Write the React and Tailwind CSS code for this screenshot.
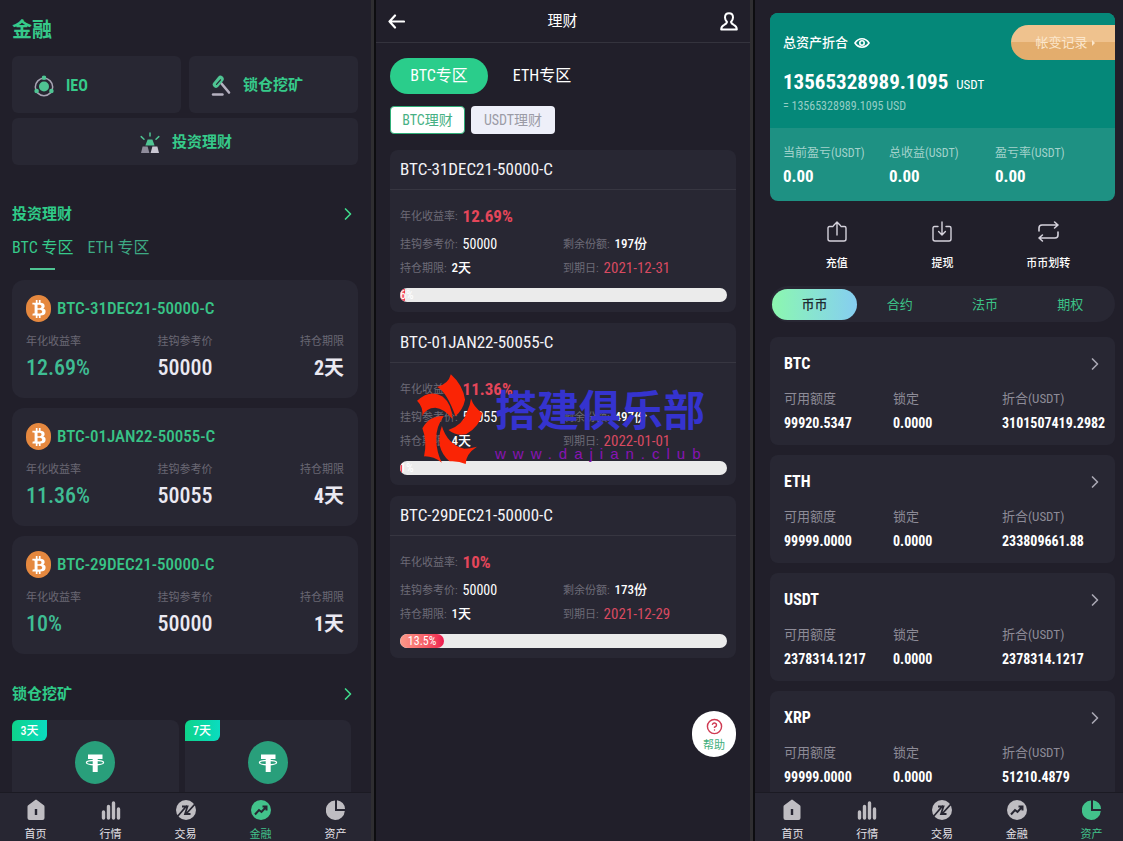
import React, { useState } from 'react';
import { FaBtc } from 'react-icons/fa6';
import { ChevronRight, CircleHelp } from 'lucide-react';

const products = [
  { name: 'BTC-31DEC21-50000-C', rate: '12.69%', price: '50000', days: '2天', left: '197份', due: '2021-12-31', progress: 1.5, label: '6%' },
  { name: 'BTC-01JAN22-50055-C', rate: '11.36%', price: '50055', days: '4天', left: '497份', due: '2022-01-01', progress: 0.5, label: '1%' },
  { name: 'BTC-29DEC21-50000-C', rate: '10%', price: '50000', days: '1天', left: '173份', due: '2021-12-29', progress: 13.5, label: '13.5%' },
];

const coins = [
  { name: 'BTC', available: '99920.5347', locked: '0.0000', total: '3101507419.2982' },
  { name: 'ETH', available: '99999.0000', locked: '0.0000', total: '233809661.88' },
  { name: 'USDT', available: '2378314.1217', locked: '0.0000', total: '2378314.1217' },
  { name: 'XRP', available: '99999.0000', locked: '0.0000', total: '51210.4879' },
];

/* ---------- icons ---------- */

const IeoIcon = () => (
  <svg viewBox="0 0 20 22" className="w-5 h-[22px]" fill="none">
    <circle cx="10" cy="12" r="8.7" stroke="#a9a5b5" strokeWidth="1.5" />
    <circle cx="10" cy="11.5" r="5" fill="#4fc493" />
    <circle cx="10" cy="2.8" r="2.3" fill="#4fc493" />
    <circle cx="2.6" cy="16" r="2.3" fill="#4fc493" />
    <circle cx="17.4" cy="16" r="2.3" fill="#4fc493" />
  </svg>
);

const HammerIcon = () => (
  <svg viewBox="0 0 20 22" className="w-5 h-[22px]" fill="none">
    <path d="M10 8l8 9.5" stroke="#b5b1c0" strokeWidth="2.6" strokeLinecap="round" />
    <path d="M5 9.5L9.5 4" stroke="#4fc493" strokeWidth="6.4" strokeLinecap="round" />
    <path d="M5.5 9.3L9.5 4.800" stroke="#282733" strokeWidth="1.2" strokeLinecap="round" />
    <path d="M2 19.500h9.500" stroke="#b5b1c0" strokeWidth="2.4" strokeLinecap="round" />
  </svg>
);

const GoldIcon = () => (
  <svg viewBox="0 0 20 22" className="w-5 h-[22px]">
    <path d="M7.6 7.500h4.800l2.200 6H5.400z" fill="#4fc493" />
    <path d="M2.600 14.500h5l1.800 6.500H1z" fill="#8f8c9b" />
    <path d="M12.400 14.500h5l1.600 6.500h-8.400z" fill="#c9c6d2" />
    <path d="M10 1v3M1.200 4.600L4 7.200M18.800 4.600L16 7.200" stroke="#4fc493" strokeWidth="1.5" strokeLinecap="round" />
  </svg>
);

const TetherIcon = () => (
  <svg viewBox="0 0 40 43" className="w-10 h-[43px]">
    <ellipse cx="20" cy="21.5" rx="20" ry="21.5" fill="#299f7b" />
    <path d="M13 13.500h14.500v4.600h-4.800v12.900h-5V18.100H13z" fill="#fff" />
    <ellipse cx="20" cy="21.6" rx="8.6" ry="2.2" fill="none" stroke="#fff" strokeWidth="1.2" />
  </svg>
);

const BackIcon = () => (
  <svg viewBox="0 0 17 15" className="w-[17px] h-[15px]" fill="none" stroke="#fff" strokeWidth="2.2" strokeLinecap="round" strokeLinejoin="round">
    <path d="M7 1.500L1.500 7.500L7 13.500M1.500 7.500H16" />
  </svg>
);

const UserIcon = () => (
  <svg viewBox="0 0 18 19" className="w-[18px] h-[19px]" fill="none" stroke="#fff" strokeWidth="2" strokeLinejoin="round">
    <path d="M9 1.200C6.600 1.200 5 3 5 5.400c0 2.200.8 3.200 2 4.600-.3 1.400-1.200 2-2.800 2.800C2 13.800 1.200 14.600 1.200 17.600h15.600c0-3-.8-3.800-3-4.800-1.600-.8-2.500-1.400-2.800-2.800 1.200-1.400 2-2.400 2-4.600C13 3 11.400 1.200 9 1.200z" />
  </svg>
);

const EyeIcon = () => (
  <svg viewBox="0 0 16 12" className="w-4 h-3" fill="none" stroke="#fff" strokeWidth="1.6">
    <path d="M1 6c3.600-5.600 10.400-5.600 14 0-3.600 5.600-10.400 5.600-14 0z" />
    <circle cx="8" cy="6" r="2.2" />
  </svg>
);

const DepositIcon = () => (
  <svg viewBox="0 0 20 21" className="w-5 h-[21px]" fill="none" stroke="#d5d2dc" strokeWidth="1.4" strokeLinecap="round" strokeLinejoin="round">
    <path d="M6 5.500H2.500Q1 5.500 1 7v11q0 2 2 2h14q2 0 2-2V7q0-1.500-1.500-1.500H14M10 14V1.200M6.600 4.400L10 1l3.400 3.400" />
  </svg>
);

const WithdrawIcon = () => (
  <svg viewBox="0 0 20 21" className="w-5 h-[21px]" fill="none" stroke="#d5d2dc" strokeWidth="1.4" strokeLinecap="round" strokeLinejoin="round">
    <path d="M6 5.500H2.500Q1 5.500 1 7v11q0 2 2 2h14q2 0 2-2V7q0-1.500-1.500-1.500H14M10 1v13M6.600 10.600L10 14l3.400-3.400" />
  </svg>
);

const TransferIcon = () => (
  <svg viewBox="0 0 21 21" className="w-[21px] h-[21px]" fill="none" stroke="#d5d2dc" strokeWidth="1.6" strokeLinecap="round" strokeLinejoin="round">
    <path d="M1 10V7q0-3 3-3h16M16.600 1L20 4l-3.400 3M20 11v3q0 3-3 3H1M4.400 14L1 17l3.400 3" />
  </svg>
);

const navIcons = {
  home: (
    <>
      <path d="M9.200.9q.8-.6 1.600 0l7 5.400q.7.500.7 1.400V19q0 2-2 2h-13q-2 0-2-2V7.700q0-.9.700-1.400z" fill="currentColor" />
      <path d="M10 10v6" stroke="#272632" strokeWidth="2.4" />
    </>
  ),
  market: <path d="M2.500 13v6M7.500 7.500V19M12.500 4v15M17.500 10v9" stroke="currentColor" strokeWidth="3.4" strokeLinecap="round" />,
  trade: (
    <>
      <circle cx="10" cy="11" r="10" fill="currentColor" />
      <path d="M1 18L11 6.500M9.500 15.500L19.500 4.500M6 7.500h5.500L9 15h5.500" stroke="#272632" strokeWidth="1.8" fill="none" />
    </>
  ),
  finance: (
    <>
      <circle cx="10" cy="11" r="10" fill="currentColor" />
      <path d="M4 15.500l4-4.500 2.500 2L15 8M11.500 7.500H15.500V11.500" stroke="#272632" strokeWidth="2" fill="none" />
    </>
  ),
  assets: (
    <>
      <path d="M9 1.500A9.500 9.800 0 1 0 18.800 12H9z" fill="currentColor" />
      <path d="M11 1.200A9 9 0 0 1 19 10h-8z" fill="currentColor" />
    </>
  ),
};

const navItems = [
  ['home', '首页'],
  ['market', '行情'],
  ['trade', '交易'],
  ['finance', '金融'],
  ['assets', '资产'],
];

const BottomNav = ({ active }) => (
  <nav className="grid grid-cols-5 h-[49px] pt-1.5 bg-[#272632] border-t border-[#1b1a23]">
    {navItems.map(([key, label]) => (
      <a key={key} href={'#' + key} className={active === key ? 'flex flex-col items-center text-[#42c28b]' : 'flex flex-col items-center text-[#bfbdc2]'}>
        <svg viewBox="0 0 20 22" className="w-5 h-[22px]">{navIcons[key]}</svg>
        <span className={active === key ? 'mt-1 text-[11px] leading-5' : 'mt-1 text-[11px] leading-5 text-[#e4e2e8]'}>{label}</span>
      </a>
    ))}
  </nav>
);

/* ---------- left: finance home ---------- */

const SectionHeader = ({ title, className }) => (
  <div className={'flex items-center justify-between ' + className}>
    <h2 className="text-[15px] leading-6 font-bold text-[#2fcb88]">{title}</h2>
    <ChevronRight className="w-5 h-5 text-[#3fdc8c]" strokeWidth={2} />
  </div>
);

const FinancePanel = () => (
  <section className="h-full flex flex-col overflow-hidden bg-[#211f2a] border-r-3 border-[#2f2e31]">
    <div className="flex-1 min-h-0 overflow-hidden pl-3 pr-[13px]">
      <h1 className="pt-3.5 text-xl leading-8 font-bold text-[#36ca8a]">金融</h1>
      <div className="mt-2.5 grid grid-cols-2 gap-x-2 gap-y-[5px] text-base font-bold text-[#36ca8a]">
        <button className="h-[57px] pl-[22px] pt-0.5 flex items-center gap-3 rounded-md bg-[#282733]">
          <IeoIcon />IEO
        </button>
        <button className="h-[57px] pl-[22px] pt-0.5 flex items-center gap-3 rounded-md bg-[#282733] text-[15px]">
          <HammerIcon />锁仓挖矿
        </button>
        <button className="col-span-2 h-[47px] pl-0.5 pt-0.5 flex items-center justify-center gap-3 rounded-md bg-[#282733] text-[15px]">
          <GoldIcon />投资理财
        </button>
      </div>

      <SectionHeader title="投资理财" className="mt-[37px]" />
      <div className="mt-2.5 flex gap-3.5 text-base leading-6 text-[#3ea983]">
        <button className="relative text-[#36ca8a] after:absolute after:left-[18px] after:top-8 after:w-[25px] after:h-0.5 after:bg-[#4fc493]">BTC 专区</button>
        <button>ETH 专区</button>
      </div>

      <div className="mt-5 flex flex-col gap-2.5">
        {products.map((p) => (
          <article key={p.name} className="rounded-xl bg-[#282733] px-3.5 pt-[15px] pb-4">
            <h3 className="flex items-center gap-1.5 text-[17px] font-medium text-[#38c487]">
              <span className="w-[25px] h-[27px] rounded-full bg-[#e5883f] flex items-center justify-center text-white">
                <FaBtc className="w-4 h-[18px]" />
              </span>
              {p.name}
            </h3>
            <dl className="mt-3 grid grid-cols-[1fr_auto_1fr]">
              <div>
                <dt className="text-[11px] leading-4 text-[#6a6874]">年化收益率</dt>
                <dd className="mt-1 text-[22px] leading-7 font-medium text-[#3fbd93]">{p.rate}</dd>
              </div>
              <div className="text-center">
                <dt className="text-[11px] leading-4 text-[#6a6874]">挂钩参考价</dt>
                <dd className="mt-1 text-[22px] leading-7 font-medium text-[#ebe9f2]">{p.price}</dd>
              </div>
              <div className="text-right">
                <dt className="text-[11px] leading-4 text-[#6a6874]">持仓期限</dt>
                <dd className="mt-1 text-xl leading-7 font-bold text-[#ebe9f2]">{p.days}</dd>
              </div>
            </dl>
          </article>
        ))}
      </div>

      <SectionHeader title="锁仓挖矿" className="mt-7" />
      <div className="mt-3.5 mr-[7px] grid grid-cols-2 gap-1.5">
        {['3天', '7天'].map((d) => (
          <article key={d} className="relative h-32 pt-[21px] flex justify-center rounded-lg bg-[#282733]">
            <span className="absolute left-0 top-0 w-[35px] h-[21px] rounded-tl-md rounded-br-md bg-linear-to-r from-[#0fd38a] to-[#0bdcc0] text-center text-xs leading-[22px] font-medium text-white">{d}</span>
            <TetherIcon />
          </article>
        ))}
      </div>
    </div>
    <div className="-mx-0.5">
      <BottomNav active="finance" />
    </div>
  </section>
);

/* ---------- middle: wealth list ---------- */

const Row = ({ label, children }) => (
  <div className="flex items-center gap-[5px]">
    <dt className="pt-0.5 text-[11px] leading-5 text-[#6d6b77]">{label}:</dt>
    {children}
  </div>
);

const Watermark = () => (
  <div className="absolute left-10 top-[374px] z-10 flex items-start gap-3 pointer-events-none">
    <svg viewBox="14 14 202 272" className="w-[67px] h-[90px]" fill="#fa2405">
      <path d="M119 15Q156 48 162 92Q156 122 133 142Q108 70 78 53Q112 44 119 15z" />
      <path d="M17 95Q56 58 94 82Q122 104 124 150Q98 118 72 116Q44 116 33 142Q36 114 17 95z" />
      <path d="M33 178Q54 140 98 141Q74 172 75 212Q76 252 92 282Q66 262 38 263Q48 218 33 178z" />
      <path d="M92 171Q108 226 160 240Q176 240 198 234Q164 256 164 286Q142 276 115 278Q68 236 92 171z" />
      <path d="M180 88Q188 114 214 132Q206 174 165 196Q135 202 112 183Q156 168 168 128Q178 108 180 88z" />
    </svg>
    <div className="pt-2">
      <p className="text-[42px] leading-[60px] font-bold text-[#3533cf]">搭建俱乐部</p>
      <p className="font-['Liberation_Sans',sans-serif] text-[15px] leading-6 tracking-[7px] text-[#8814b4]">www.dajian.club</p>
    </div>
  </div>
);

const WealthPanel = () => {
  const [zone, setZone] = useState('BTC专区');

  return (
    <section className="relative h-full overflow-hidden bg-[#211f2a] border-r-3 border-[#2f2e31]">
      <header className="h-[43px] px-3 flex items-center justify-between border-b border-[#34333d] text-white">
        <button aria-label="返回"><BackIcon /></button>
        <h1 className="text-[15px]">理财</h1>
        <button aria-label="用户"><UserIcon /></button>
      </header>

      <div className="px-3.5 pt-[15px]">
        <div className="flex gap-[5px]">
          {['BTC专区', 'ETH专区'].map((z) => (
            <button
              key={z}
              onClick={() => setZone(z)}
              className={zone === z ? 'w-[98px] h-9 rounded-full bg-[#2acd8b] text-base text-white' : 'w-[98px] h-9 rounded-full text-base text-white'}
            >
              {z}
            </button>
          ))}
        </div>
        <div className="mt-3 flex gap-1.5 text-sm">
          <button className="w-[75px] h-7 rounded-sm border border-[#2fae78] bg-white text-[#46b083]">BTC理财</button>
          <button className="w-[84px] h-7 rounded-sm bg-[#eeeff9] text-[#9b9ba6]">USDT理财</button>
        </div>

        <div className="mt-4 flex flex-col gap-[11px]">
          {products.map((p) => (
            <article key={p.name} className="rounded-lg bg-[#282733] pb-[10px]">
              <h2 className="h-10 px-2.5 flex items-center border-b border-[#373641] text-[17px] text-[#f4f3f7]">{p.name}</h2>
              <dl className="mt-[14px] px-2.5 grid grid-cols-2 text-sm leading-6 text-white">
                <div className="col-span-2 mb-1">
                  <Row label="年化收益率"><dd className="text-[17px] leading-6 font-bold text-[#e5465a]">{p.rate}</dd></Row>
                </div>
                <Row label="挂钩参考价"><dd>{p.price}</dd></Row>
                <Row label="剩余份额"><dd className="text-[13px] leading-6 font-medium">{p.left}</dd></Row>
                <Row label="持仓期限"><dd className="text-[13px] leading-6 font-medium">{p.days}</dd></Row>
                <Row label="到期日"><dd className="text-[15px] leading-6 text-[#d94a61]">{p.due}</dd></Row>
              </dl>
              <div className="mt-2 ml-2.5 mr-[9px] h-3.5 rounded-full bg-[#ebebeb] overflow-hidden">
                <div
                  className={
                    p.progress < 5
                      ? 'h-full flex items-center justify-start whitespace-nowrap rounded-full bg-linear-to-r from-[#fb9a8a] to-[#ee1650] text-xs text-white'
                      : 'h-full flex items-center justify-center whitespace-nowrap rounded-full bg-linear-to-r from-[#fb9a8a] to-[#ee1650] text-xs text-white'
                  }
                  style={{ width: p.progress + '%' }}
                >
                  {p.label}
                </div>
              </div>
            </article>
          ))}
        </div>
      </div>

      <Watermark />

      <button className="absolute right-3.5 bottom-[84px] w-11 h-[46px] pt-1 rounded-full bg-white flex flex-col items-center justify-center gap-0.5">
        <CircleHelp className="w-[17px] h-[17px] text-[#cf3a52]" />
        <span className="text-[11px] leading-[18px] text-[#3fae7b]">帮助</span>
      </button>
    </section>
  );
};

/* ---------- right: assets ---------- */

const actions = [
  ['充值', DepositIcon],
  ['提现', WithdrawIcon],
  ['币币划转', TransferIcon],
];

const AssetsPanel = () => {
  const [tab, setTab] = useState('币币');

  return (
    <section className="h-full flex flex-col overflow-hidden bg-[#211f2a]">
      <div className="flex-1 min-h-0 overflow-hidden pl-[15px] pr-2 pt-[13px]">
        <div className="rounded-lg overflow-hidden bg-[#1e9183]">
          <div className="h-[115px] pl-[13px] pt-3 bg-[#058879] text-white">
            <div className="flex items-center justify-between">
              <p className="flex items-center gap-1.5 text-[13px] font-medium">总资产折合 <EyeIcon /></p>
              <button className="w-[104px] h-[35px] pl-1 flex items-center justify-center gap-1 rounded-l-full bg-linear-to-b from-[#efc28e] from-50% to-[#e3ad6d] to-50% text-[13px] text-[#fbe6cb]">
                帐变记录
                <span className="border-y-3 border-l-3 border-y-transparent border-l-[#fbe6cb]" />
              </button>
            </div>
            <p className="mt-1.5 flex items-baseline gap-2 text-[21px] leading-8 font-bold">
              13565328989.1095 <span className="text-[13px] leading-4 font-normal">USDT</span>
            </p>
            <p className="text-xs leading-4 text-[#95cdc5]">= 13565328989.1095 USD</p>
          </div>
          <dl className="h-[73px] pl-[13px] pr-3.5 pt-[17px] grid grid-cols-3">
            {['当前盈亏(USDT)', '总收益(USDT)', '盈亏率(USDT)'].map((label) => (
              <div key={label}>
                <dt className="text-xs leading-4 text-[#a3d3cc]">{label}</dt>
                <dd className="mt-1 text-[17px] leading-[22px] font-bold text-white">0.00</dd>
              </div>
            ))}
          </dl>
        </div>

        <div className="mt-5 px-3.5 grid grid-cols-3">
          {actions.map(([label, Icon]) => (
            <button key={label} className="flex flex-col items-center gap-3.5 text-[11px] leading-4 font-medium text-white">
              <Icon />
              {label}
            </button>
          ))}
        </div>

        <div className="mt-3.5 h-9 px-0.5 grid grid-cols-4 items-center rounded-full bg-[#282733]">
          {['币币', '合约', '法币', '期权'].map((t) => (
            <button
              key={t}
              onClick={() => setTab(t)}
              className={tab === t ? 'h-[31px] pt-0.5 rounded-full bg-linear-to-r from-[#8cf7ae] to-[#86cdf0] text-[13px] font-medium text-[#1f2b33]' : 'h-[31px] pt-0.5 text-[13px] text-[#3cc287]'}
            >
              {t}
            </button>
          ))}
        </div>

        <div className="mt-[15px] flex flex-col gap-2.5">
          {coins.map((c) => (
            <article key={c.name} className="h-[108px] shrink-0 rounded-lg bg-[#282733] pl-3.5 pr-1 pt-[15px]">
              <div className="flex items-center justify-between pr-1.5">
                <h3 className="text-base leading-6 font-bold text-white">{c.name}</h3>
                <ChevronRight className="w-5 h-5 text-[#a9a7b3]" strokeWidth={2} />
              </div>
              <dl className="mt-[13px] grid grid-cols-3 text-sm">
                {[['可用额度', c.available], ['锁定', c.locked], ['折合(USDT)', c.total]].map(([label, value]) => (
                  <div key={label}>
                    <dt className="text-[13px] leading-5 text-[#8d8b97]">{label}</dt>
                    <dd className="mt-1 leading-5 font-bold text-white">{value}</dd>
                  </div>
                ))}
              </dl>
            </article>
          ))}
        </div>
      </div>
      <div className="-mr-1.5">
        <BottomNav active="assets" />
      </div>
    </section>
  );
};

export default function App() {
  return (
    <main className="h-screen overflow-hidden grid grid-cols-[374fr_377fr_368fr] gap-0.5 bg-[#0d0d10] font-['Roboto_Condensed','Noto_Sans_CJK_SC',sans-serif]">
      <FinancePanel />
      <WealthPanel />
      <AssetsPanel />
    </main>
  );
}
